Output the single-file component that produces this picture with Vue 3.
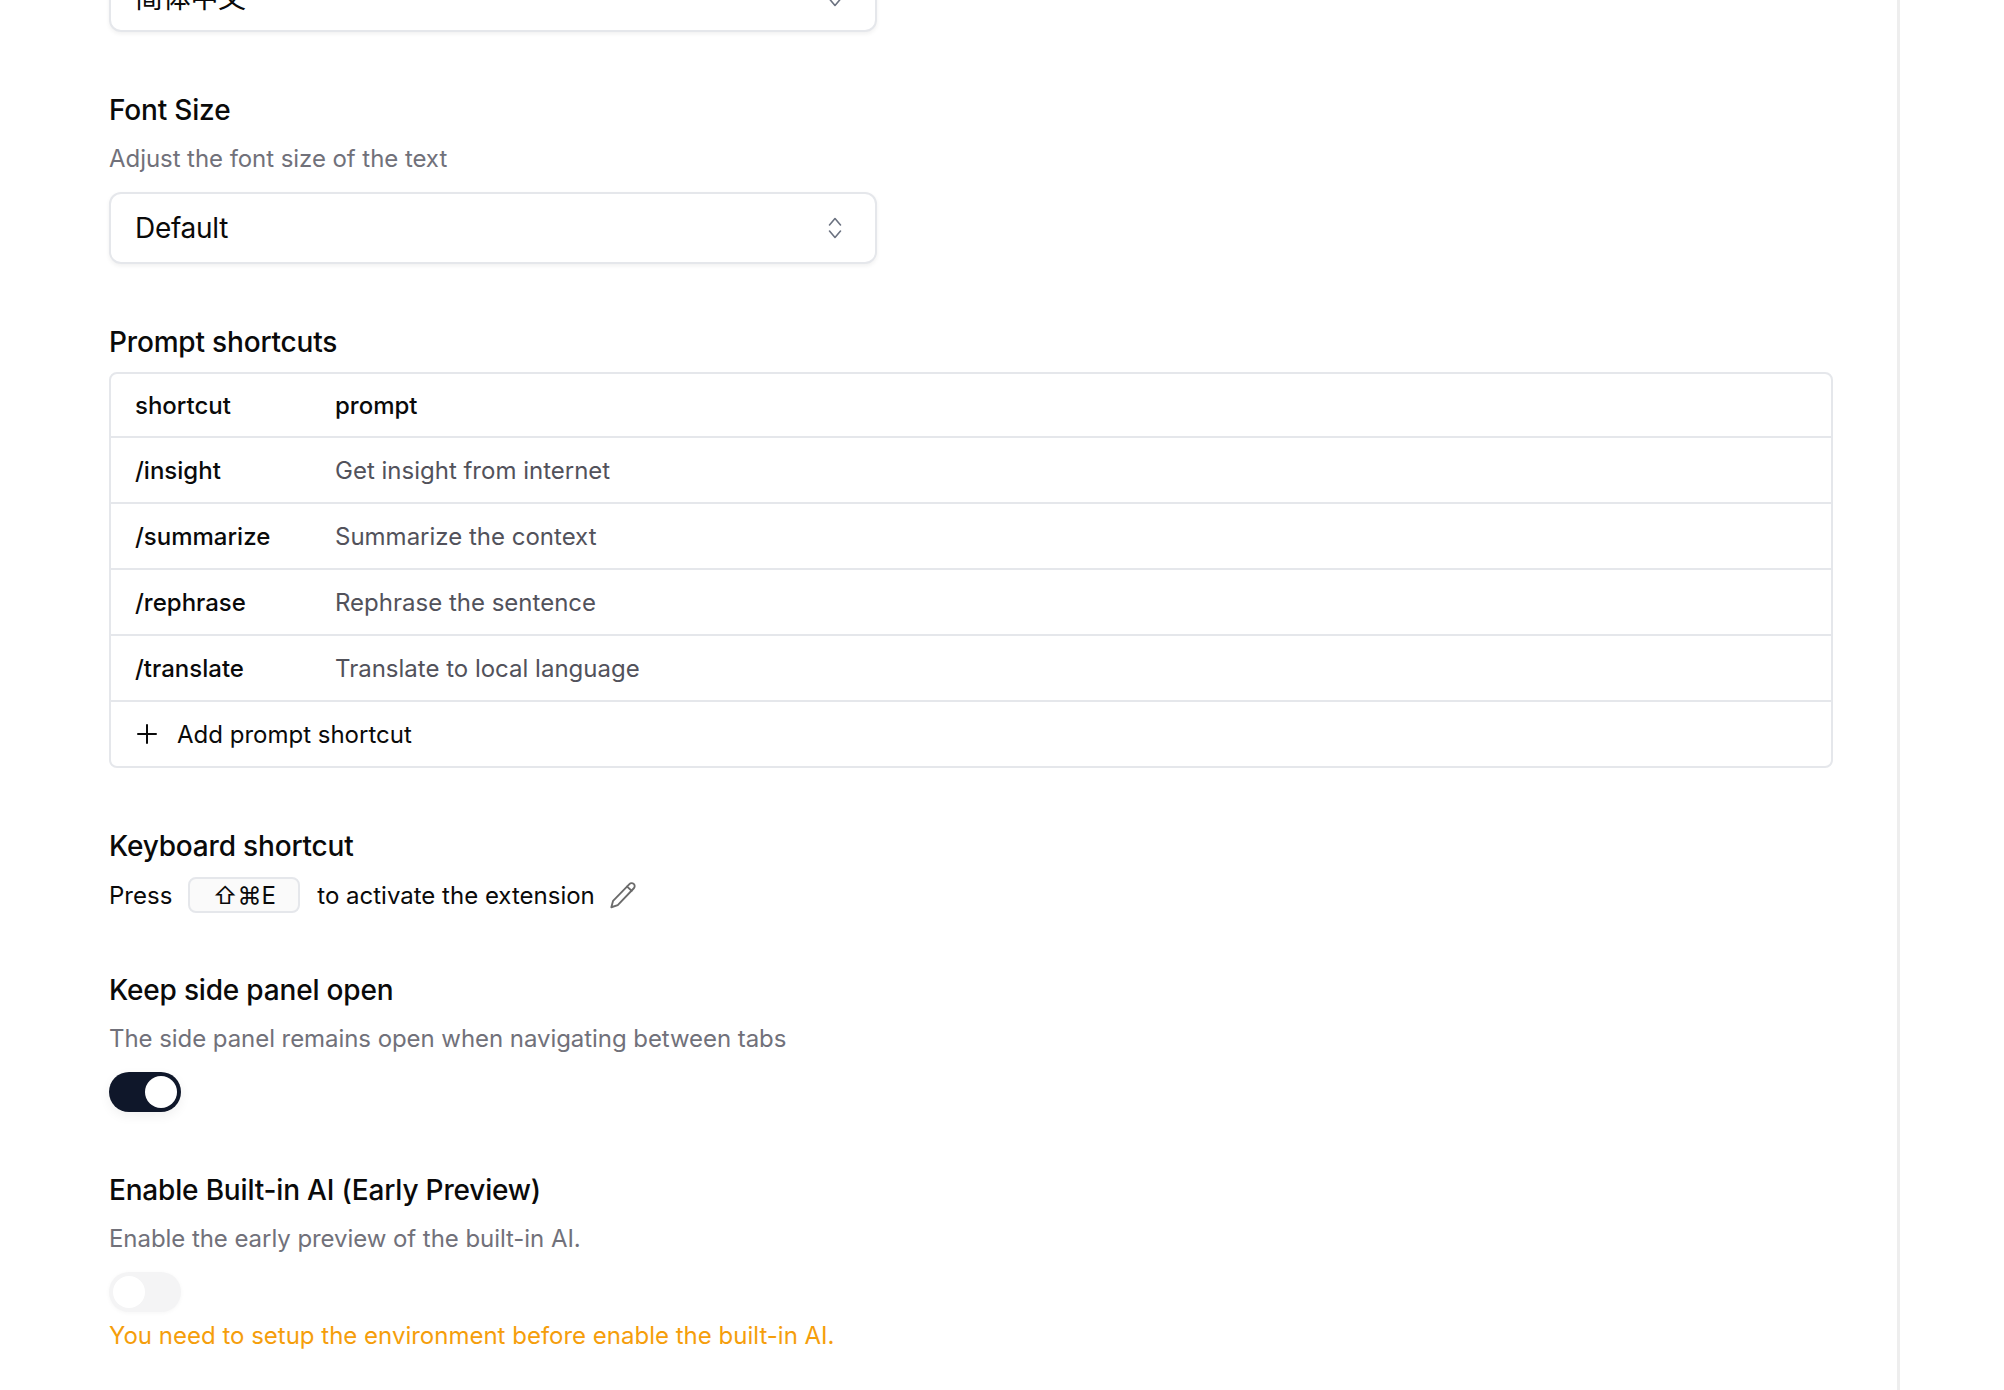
<template>
  <div class="viewport">
    <div class="panel">
      <!-- page is scrolled, language select is cut by the top edge -->
      <div class="select first">
        <span>简体中文</span>
        <svg class="caret" viewBox="0 0 20 24" fill="none" stroke="currentColor" stroke-width="1.6" stroke-linecap="round" stroke-linejoin="round">
          <path d="M4.5 9 10 2.5 15.5 9" />
          <path d="M4.5 15 10 21.5 15.5 15" />
        </svg>
      </div>

      <section class="block">
        <h2>Font Size</h2>
        <p class="desc">Adjust the font size of the text</p>
        <div class="select">
          <span>Default</span>
          <svg class="caret" viewBox="0 0 20 24" fill="none" stroke="currentColor" stroke-width="1.6" stroke-linecap="round" stroke-linejoin="round">
            <path d="M4.5 9 10 2.5 15.5 9" />
            <path d="M4.5 15 10 21.5 15.5 15" />
          </svg>
        </div>
      </section>

      <section class="block">
        <h2>Prompt shortcuts</h2>
        <div class="table">
          <div class="row head">
            <div class="cell-key">shortcut</div>
            <div class="cell-val">prompt</div>
          </div>
          <div class="row" v-for="item in shortcuts" :key="item.key">
            <div class="cell-key">{{ item.key }}</div>
            <div class="cell-val muted">{{ item.prompt }}</div>
          </div>
          <div class="row add">
            <svg class="plus" viewBox="0 0 24 24" fill="none" stroke="currentColor" stroke-width="2" stroke-linecap="round">
              <path d="M12 3v18M3 12h18" />
            </svg>
            <span>Add prompt shortcut</span>
          </div>
        </div>
      </section>

      <section class="block">
        <h2>Keyboard shortcut</h2>
        <div class="press">
          <span>Press</span>
          <kbd>⇧⌘E</kbd>
          <span>to activate the extension</span>
          <svg class="pencil" viewBox="0 0 24 24" fill="none" stroke="currentColor" stroke-width="1.6" stroke-linecap="round" stroke-linejoin="round">
            <path d="M2 22.5 3.5 17 17.5 2.6a2.6 2.6 0 0 1 3.8 3.6L7.5 20.6Z" />
            <path d="M15.5 4.8 19.4 8.4" />
          </svg>
        </div>
      </section>

      <section class="block keep">
        <h2>Keep side panel open</h2>
        <p class="desc">The side panel remains open when navigating between tabs</p>
        <div class="toggle on"><span class="knob"></span></div>
      </section>

      <section class="block">
        <h2>Enable Built-in AI (Early Preview)</h2>
        <p class="desc">Enable the early preview of the built-in AI.</p>
        <div class="toggle off"><span class="knob"></span></div>
        <p class="warn">You need to setup the environment before enable the built-in AI.</p>
      </section>
    </div>
  </div>
</template>

<script setup>
import { ref } from 'vue';

const shortcuts = ref([
  { key: '/insight', prompt: 'Get insight from internet' },
  { key: '/summarize', prompt: 'Summarize the context' },
  { key: '/rephrase', prompt: 'Rephrase the sentence' },
  { key: '/translate', prompt: 'Translate to local language' }
]);
</script>

<style>
html,
body {
  margin: 0;
  background: #fff;
}
</style>

<style scoped>
.viewport {
  height: 1390px;
  overflow: hidden;
  font-family: Inter, "Noto Sans CJK SC", "Liberation Sans", sans-serif;
  color: #0a0a0a;
}

.panel {
  display: flow-root;
  box-sizing: border-box;
  width: 1900px;
  height: 1390px;
  padding: 0 64px 0 109px;
  border-right: 3px solid #eeeeee;
}

.first {
  margin-top: -40px;
}

.block {
  margin-top: 58px;
}

h2 {
  margin: 0;
  font-size: 28px;
  line-height: 40px;
  font-weight: 500;
  letter-spacing: -0.18px;
}

.desc {
  margin: 11px 0 0;
  font-size: 24px;
  line-height: 36px;
  letter-spacing: -0.06px;
  color: #71717a;
}

.select {
  box-sizing: border-box;
  width: 768px;
  height: 72px;
  padding: 0 24px;
  display: flex;
  align-items: center;
  justify-content: space-between;
  background: #fff;
  border: 2px solid #e5e7eb;
  border-radius: 12px;
  box-shadow: 0 2px 4px rgba(0, 0, 0, 0.06);
  font-size: 28px;
  letter-spacing: -0.3px;
}

.block .select {
  margin-top: 15px;
}

.caret {
  width: 20px;
  height: 24px;
  margin-right: 6px;
  color: #6b7280;
}

.block .table {
  margin-top: 10px;
}

.table {
  box-sizing: border-box;
  border: 2px solid #e5e7eb;
  border-radius: 8px;
  font-size: 24px;
}

.row {
  height: 66px;
  box-sizing: border-box;
  padding: 0 24px;
  display: flex;
  align-items: center;
  border-bottom: 2px solid #e5e7eb;
  font-weight: 500;
}

.row.head {
  height: 64px;
}

.row:last-child {
  height: 64px;
  border-bottom: none;
}

.cell-key {
  width: 200px;
}

.muted {
  font-weight: 400;
  color: #52525b;
}

.add {
  font-weight: 400;
}

.plus {
  width: 24px;
  height: 24px;
  margin-right: 18px;
}

.press {
  margin-top: 11px;
  height: 36px;
  display: flex;
  align-items: center;
  font-size: 24px;
}

.keep {
  margin-top: 57px;
}

kbd {
  box-sizing: border-box;
  width: 112px;
  height: 36px;
  margin: 0 17px 0 16px;
  display: flex;
  align-items: center;
  justify-content: center;
  background: #fafafa;
  border: 2px solid #e5e7eb;
  border-radius: 8px;
  font-family: Inter, "DejaVu Sans", sans-serif;
  font-size: 24px;
}

.pencil {
  width: 28px;
  height: 28px;
  margin-left: 14px;
  color: #6b6b6b;
}

.toggle {
  box-sizing: border-box;
  width: 72px;
  height: 40px;
  margin-top: 15px;
  padding: 4px;
  display: flex;
  border-radius: 20px;
}

.toggle.on {
  justify-content: flex-end;
  background: #0f172a;
  box-shadow: 0 4px 12px rgba(0, 0, 0, 0.06);
}

.toggle.off {
  background: #f4f4f5;
  box-shadow: 0 1px 4px rgba(0, 0, 0, 0.04);
}

.knob {
  width: 32px;
  height: 32px;
  border-radius: 50%;
  background: #fff;
}

.warn {
  margin: 6px 0 0;
  font-size: 24px;
  line-height: 36px;
  color: #f59e0b;
}
</style>
